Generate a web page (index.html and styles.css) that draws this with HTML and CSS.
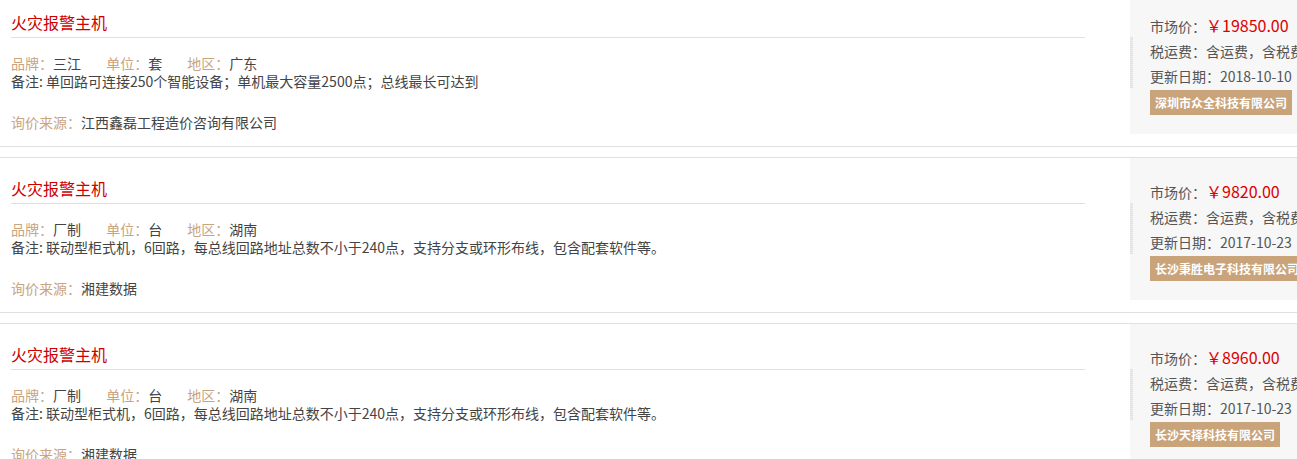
FILE: index.html
```html
<!DOCTYPE html>
<html>
<head>
<meta charset="utf-8">
<link rel="stylesheet" href="styles.css">
</head>
<body>

<div class="list">

  <!-- item 1 -->
  <div class="item">
    <div class="info">
      <h3 class="title">火灾报警主机</h3>
      <div class="attrs">
        <span><em class="label">品牌：</em>三江</span>
        <span><em class="label">单位：</em>套</span>
        <span><em class="label">地区：</em>广东</span>
      </div>
      <div class="note">备注: 单回路可连接250个智能设备；单机最大容量2500点；总线最长可达到</div>
      <div class="source"><em class="label">询价来源：</em>江西鑫磊工程造价咨询有限公司</div>
    </div>
    <div class="panel">
      <p>市场价：<span class="price">￥19850.00</span></p>
      <p>税运费：含运费，含税费</p>
      <p>更新日期：2018-10-10</p>
      <span class="tag">深圳市众全科技有限公司</span>
    </div>
  </div>

  <!-- item 2 -->
  <div class="item">
    <div class="info">
      <h3 class="title">火灾报警主机</h3>
      <div class="attrs">
        <span><em class="label">品牌：</em>厂制</span>
        <span><em class="label">单位：</em>台</span>
        <span><em class="label">地区：</em>湖南</span>
      </div>
      <div class="note">备注: 联动型柜式机，6回路，每总线回路地址总数不小于240点，支持分支或环形布线，包含配套软件等。</div>
      <div class="source"><em class="label">询价来源：</em>湘建数据</div>
    </div>
    <div class="panel">
      <p>市场价：<span class="price">￥9820.00</span></p>
      <p>税运费：含运费，含税费</p>
      <p>更新日期：2017-10-23</p>
      <span class="tag">长沙秉胜电子科技有限公司</span>
    </div>
  </div>

  <!-- item 3 -->
  <div class="item">
    <div class="info">
      <h3 class="title">火灾报警主机</h3>
      <div class="attrs">
        <span><em class="label">品牌：</em>厂制</span>
        <span><em class="label">单位：</em>台</span>
        <span><em class="label">地区：</em>湖南</span>
      </div>
      <div class="note">备注: 联动型柜式机，6回路，每总线回路地址总数不小于240点，支持分支或环形布线，包含配套软件等。</div>
      <div class="source"><em class="label">询价来源：</em>湘建数据</div>
    </div>
    <div class="panel">
      <p>市场价：<span class="price">￥8960.00</span></p>
      <p>税运费：含运费，含税费</p>
      <p>更新日期：2017-10-23</p>
      <span class="tag">长沙天择科技有限公司</span>
    </div>
  </div>

</div>

</body>
</html>
```

FILE: styles.css
```css
body {
  margin: 0;
  font-family: "Noto Sans CJK SC", "Microsoft YaHei", sans-serif;
  font-size: 14px;
  color: #444;
  overflow: hidden;
}

.list {
  width: 1340px;
  margin-top: -9px;
}

.item {
  display: flex;
  height: 154px;
  border-top: 1px solid #e0e0e0;
  border-bottom: 1px solid #e0e0e0;
  margin-bottom: 10px;
}

.info {
  width: 1074px;
  margin-left: 11px;
  padding-top: 15px;
}

.title {
  margin: 0;
  font-size: 16px;
  font-weight: normal;
  line-height: 30px;
  color: #cc0000;
  border-bottom: 1px solid #e0e0e0;
}

.label {
  font-style: normal;
  color: #c9a47f;
}

.attrs {
  margin-top: 16px;
  line-height: 18px;
}

.attrs span {
  margin-right: 22px;
}

.note {
  line-height: 18px;
}

.source {
  margin-top: 23px;
  line-height: 18px;
}

.panel {
  position: relative;
  margin-left: 45px;
  width: 200px;
  height: 142px;
  box-sizing: border-box;
  padding: 21px 0 0 20px;
  background: #f7f7f7;
  color: #555;
  white-space: nowrap;
  overflow: hidden;
}

/* little grip bar on the panel's left edge */
.panel::before {
  content: "";
  position: absolute;
  left: 0;
  top: 45px;
  width: 3px;
  height: 51px;
  background: repeating-linear-gradient(#e2e2e2 0 1px, #ececec 1px 2px);
}

.panel p {
  margin: 0;
  line-height: 25px;
}

.price {
  font-size: 16px;
  color: #dd0000;
}

.tag {
  display: inline-block;
  margin-top: 1px;
  height: 25px;
  line-height: 25px;
  padding: 0 5px;
  background: #c9a47b;
  color: #fff;
  font-size: 12px;
  font-weight: bold;
}
```
